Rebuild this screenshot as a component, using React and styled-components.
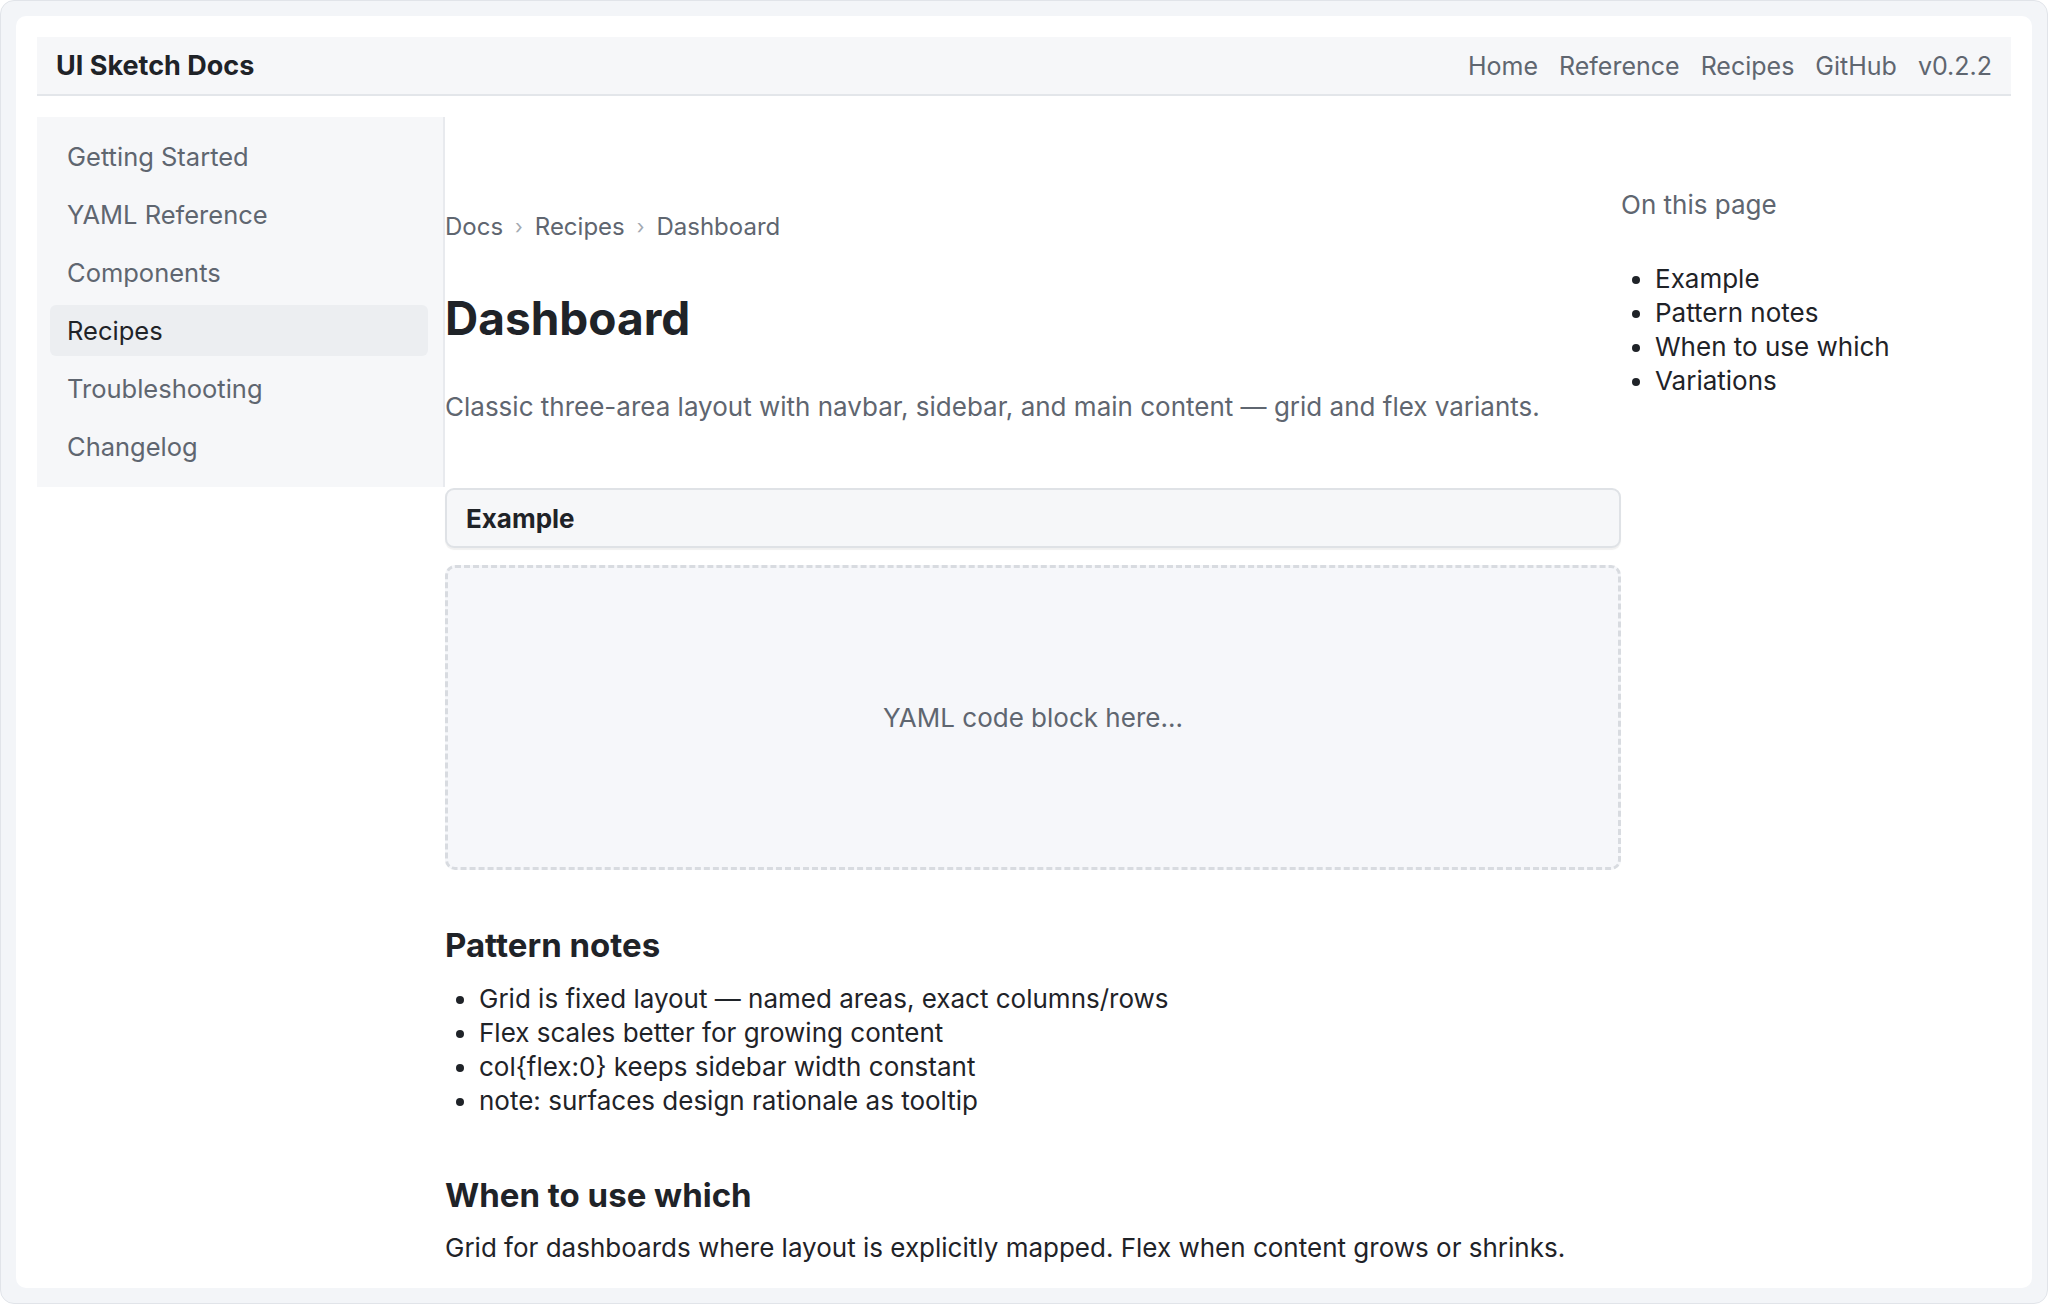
import React from "react";
import styled, { createGlobalStyle } from "styled-components";

const GlobalStyle = createGlobalStyle`
  * { box-sizing: border-box; }
  body {
    margin: 0;
    background: #ffffff;
    font-family: Inter, "Liberation Sans", sans-serif;
    color: #1f2328;
  }
`;

const Frame = styled.div`
  height: 1304px;
  padding: 15px;
  border: 1px solid #e1e4e9;
  border-radius: 14px;
  background: #f3f5f8;
`;

const Panel = styled.div`
  height: 100%;
  padding: 21px;
  background: #ffffff;
  border-radius: 10px;
  overflow: hidden;
`;

const Navbar = styled.header`
  height: 59px;
  padding: 0 19px;
  display: flex;
  align-items: center;
  justify-content: space-between;
  background: #f6f7f9;
  border-bottom: 2px solid #e3e6ea;
`;

const Brand = styled.div`
  font-size: 27px;
  font-weight: 700;
  color: #1f2328;
`;

const NavLinks = styled.nav`
  display: flex;
  gap: 21px;
`;

const NavLink = styled.a`
  font-size: 25px;
  color: #5f6670;
  text-decoration: none;
`;

const Body = styled.div`
  display: flex;
  margin-top: 21px;
`;

const Sidebar = styled.aside`
  width: 408px;
  flex: 0 0 408px;
  align-self: flex-start;
  padding: 14px 15px 15px 13px;
  display: flex;
  flex-direction: column;
  gap: 7px;
  background: #f6f7f9;
  border-right: 2px solid #e8eaee;
`;

const SideItem = styled.a`
  padding: 12px 17px;
  font-size: 25.5px;
  line-height: 27px;
  border-radius: 6px;
  text-decoration: none;
  color: ${(p) => (p.$active ? "#1f2328" : "#5f6670")};
  background: ${(p) => (p.$active ? "#eceef1" : "transparent")};
`;

const Main = styled.main`
  width: 1176px;
  flex: 0 0 1176px;
  padding-top: 94px;
`;

const Crumbs = styled.div`
  display: flex;
  align-items: center;
  gap: 12px;
  font-size: 24px;
  line-height: 32px;
  color: #5f6670;
`;

const Sep = styled.span`
  font-size: 20px;
  color: #a3a9b1;
`;

const Title = styled.h1`
  margin: 46px 0 0;
  font-size: 46px;
  line-height: 58px;
  font-weight: 700;
  color: #1f2328;
`;

const Lead = styled.p`
  margin: 43px 0 0;
  font-size: 26px;
  line-height: 34px;
  color: #5f6670;
`;

const ExampleBar = styled.div`
  margin-top: 64px;
  height: 60px;
  padding: 0 19px;
  display: flex;
  align-items: center;
  font-size: 26px;
  font-weight: 700;
  background: #f6f7f9;
  border: 2px solid #dfe2e6;
  border-radius: 9px;
  box-shadow: 0 2px 1px rgba(0, 0, 0, 0.06);
`;

const CodeSlot = styled.div`
  margin-top: 17px;
  height: 305px;
  display: flex;
  align-items: center;
  justify-content: center;
  font-size: 26px;
  color: #5f6670;
  background: #f6f7fa;
  border: 3px dashed #d8dbe0;
  border-radius: 10px;
`;

const H2 = styled.h2`
  margin: ${(p) => p.$top}px 0 0;
  font-size: 33px;
  line-height: 40px;
  font-weight: 700;
  color: #1f2328;
`;

const List = styled.ul`
  margin: ${(p) => p.$top}px 0 0;
  padding-left: 34px;
  font-size: 26px;
  line-height: 34px;
  color: #1f2328;
`;

const Para = styled.p`
  margin: 16px 0 0;
  font-size: 26px;
  line-height: 34px;
  color: #1f2328;
`;

const Toc = styled.aside`
  flex: 1;
  padding-top: 72px;
`;

const TocTitle = styled.div`
  font-size: 26px;
  line-height: 32px;
  color: #5f6670;
`;

const sideItems = [
  "Getting Started",
  "YAML Reference",
  "Components",
  "Recipes",
  "Troubleshooting",
  "Changelog",
];

const notes = [
  "Grid is fixed layout — named areas, exact columns/rows",
  "Flex scales better for growing content",
  "col{flex:0} keeps sidebar width constant",
  "note: surfaces design rationale as tooltip",
];

const tocItems = ["Example", "Pattern notes", "When to use which", "Variations"];

export default function App() {
  return (
    <>
      <GlobalStyle />
      <Frame>
        <Panel>
          <Navbar>
            <Brand>UI Sketch Docs</Brand>
            <NavLinks>
              <NavLink>Home</NavLink>
              <NavLink>Reference</NavLink>
              <NavLink>Recipes</NavLink>
              <NavLink>GitHub</NavLink>
              <NavLink>v0.2.2</NavLink>
            </NavLinks>
          </Navbar>
          <Body>
            <Sidebar>
              {sideItems.map((s) => (
                <SideItem key={s} $active={s === "Recipes"}>
                  {s}
                </SideItem>
              ))}
            </Sidebar>
            <Main>
              <Crumbs>
                <span>Docs</span>
                <Sep>›</Sep>
                <span>Recipes</span>
                <Sep>›</Sep>
                <span>Dashboard</span>
              </Crumbs>
              <Title>Dashboard</Title>
              <Lead>
                Classic three-area layout with navbar, sidebar, and main content — grid and flex variants.
              </Lead>
              <ExampleBar>Example</ExampleBar>
              <CodeSlot>YAML code block here...</CodeSlot>
              <H2 $top={55}>Pattern notes</H2>
              <List $top={17}>
                {notes.map((n) => (
                  <li key={n}>{n}</li>
                ))}
              </List>
              <H2 $top={57}>When to use which</H2>
              <Para>
                Grid for dashboards where layout is explicitly mapped. Flex when content grows or shrinks.
              </Para>
            </Main>
            <Toc>
              <TocTitle>On this page</TocTitle>
              <List $top={41}>
                {tocItems.map((t) => (
                  <li key={t}>{t}</li>
                ))}
              </List>
            </Toc>
          </Body>
        </Panel>
      </Frame>
    </>
  );
}
